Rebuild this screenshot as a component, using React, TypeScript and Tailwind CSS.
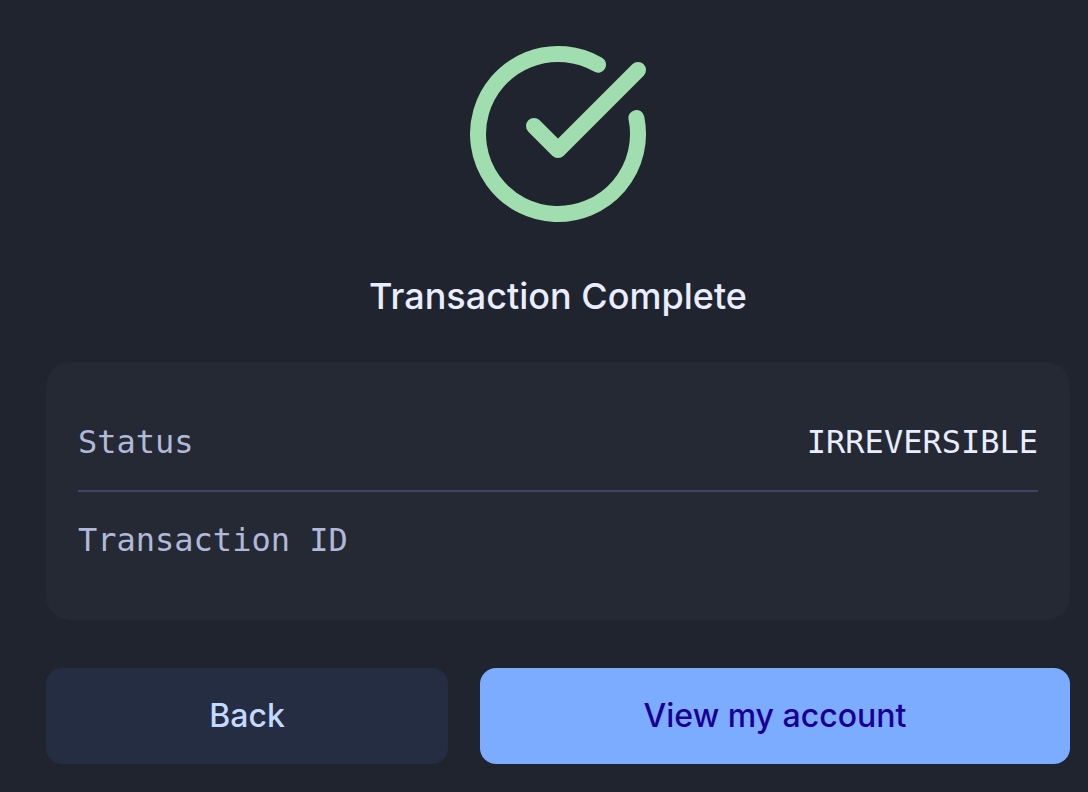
import { CircleCheckBig } from "lucide-react";

export default function App() {
  return (
    <main className="flex min-h-screen flex-col bg-[#20242e] pt-[38px] pr-[18px] pl-[46px] font-['Inter',sans-serif]">
      <CircleCheckBig className="size-48 self-center text-[#a0deb0]" strokeWidth={2} aria-hidden="true" />

      <h1 className="mt-10 text-center text-4xl leading-[52px] font-medium text-[#e8edff]">
        Transaction Complete
      </h1>

      <dl className="mt-10 rounded-3xl bg-[#252933] p-8 font-['DejaVu_Sans_Mono',monospace] text-[32px] leading-12">
        <div className="flex items-center justify-between border-b-2 border-[#3e4566] py-6">
          <dt className="text-[#b0b9d9]">Status</dt>
          <dd className="text-[#e8edff]">IRREVERSIBLE</dd>
        </div>
        <div className="flex items-center justify-between py-6">
          <dt className="text-[#b0b9d9]">Transaction ID</dt>
          <dd />
        </div>
      </dl>

      <div className="mt-12 flex gap-8 text-[32px] leading-12 font-medium">
        <button type="button" className="w-[402px] rounded-2xl bg-[#252d42] py-6 text-[#c3d9ff]">
          Back
        </button>
        <button type="button" className="flex-1 rounded-2xl bg-[#7cacff] py-6 text-[#1b0092]">
          View my account
        </button>
      </div>
    </main>
  );
}
